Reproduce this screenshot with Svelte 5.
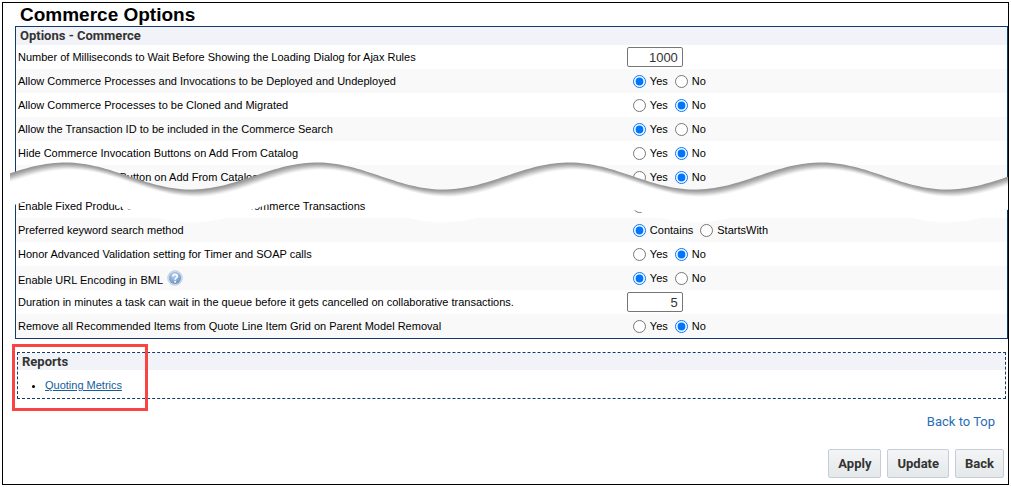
<script lang="ts">
  type Option = {
    id: string;
    label: string;
    choices?: string[];
    value: string;
    help?: boolean;
  };

  const yesNo = ['Yes', 'No'];

  let options: Option[] = $state([
    { id: 'ajaxWait', label: 'Number of Milliseconds to Wait Before Showing the Loading Dialog for Ajax Rules', value: '1000' },
    { id: 'deploy', label: 'Allow Commerce Processes and Invocations to be Deployed and Undeployed', choices: yesNo, value: 'Yes' },
    { id: 'clone', label: 'Allow Commerce Processes to be Cloned and Migrated', choices: yesNo, value: 'No' },
    { id: 'transactionId', label: 'Allow the Transaction ID to be included in the Commerce Search', choices: yesNo, value: 'Yes' },
    { id: 'hideInvocation', label: 'Hide Commerce Invocation Buttons on Add From Catalog', choices: yesNo, value: 'No' },
    { id: 'hideSave', label: 'Hide Save as Quote Button on Add From Catalog', choices: yesNo, value: 'No' },
  ]);

  let moreOptions: Option[] = $state([
    { id: 'fixedProduct', label: 'Enable Fixed Product Column Headers for the Commerce Transactions', choices: yesNo, value: 'No' },
    { id: 'keyword', label: 'Preferred keyword search method', choices: ['Contains', 'StartsWith'], value: 'Contains' },
    { id: 'validation', label: 'Honor Advanced Validation setting for Timer and SOAP calls', choices: yesNo, value: 'No' },
    { id: 'urlEncoding', label: 'Enable URL Encoding in BML', choices: yesNo, value: 'Yes', help: true },
    { id: 'queueWait', label: 'Duration in minutes a task can wait in the queue before it gets cancelled on collaborative transactions.', value: '5' },
    { id: 'removeItems', label: 'Remove all Recommended Items from Quote Line Item Grid on Parent Model Removal', choices: yesNo, value: 'No' },
  ]);

  // the tear between the two halves of the list
  const waveWidth = 998;

  function waveY(x: number) {
    return 14 - 13.5 * Math.cos(((x - 55) / 252) * 2 * Math.PI);
  }

  function tear(dx: number, dy: number, depth: number) {
    const top: string[] = [];
    const bottom: string[] = [];
    for (let x = 0; x <= waveWidth + 2; x += 4) {
      top.push(`${x} ${(waveY(x - dx) + dy).toFixed(1)}`);
      bottom.unshift(`${x} ${(waveY(x) + depth).toFixed(1)}`);
    }
    return 'M' + top.concat(bottom).join('L') + 'Z';
  }

  // shadow under the torn edge, dark to light
  const shades = [150, 158, 168, 180, 193, 207, 221, 235, 246];
</script>

{#snippet row(option: Option)}
  <div class="row">
    <div class="label">
      {#if option.choices}
        <span id="{option.id}-label">{option.label}</span>
      {:else}
        <label for={option.id}>{option.label}</label>
      {/if}
      {#if option.help}
        <svg class="help" viewBox="0 0 16 16" role="img" aria-label="Help">
          <defs>
            <radialGradient id="ball" cx="45%" cy="30%" r="75%">
              <stop offset="0" stop-color="#b4d0ee" />
              <stop offset="0.6" stop-color="#86aad6" />
              <stop offset="1" stop-color="#6289be" />
            </radialGradient>
          </defs>
          <circle cx="8" cy="8" r="7.3" fill="#d3dfee" stroke="#b9c8dc" stroke-width="0.8" />
          <circle cx="8" cy="8" r="6" fill="url(#ball)" />
          <path d="M5.8 6.4C5.8 3.6 10.3 3.6 10.3 6.3C10.3 8 8.1 7.9 8.1 9.7" fill="none" stroke="#fff" stroke-width="1.7" />
          <circle cx="8.1" cy="11.7" r="1" fill="#fff" />
        </svg>
      {/if}
    </div>
    {#if option.choices}
      <div class="choices" role="radiogroup" aria-labelledby="{option.id}-label">
        {#each option.choices as choice}
          <label>
            <input
              type="radio"
              name={option.id}
              value={choice}
              checked={option.value === choice}
              onchange={() => (option.value = choice)}
            />{choice}
          </label>
        {/each}
      </div>
    {:else}
      <div class="entry">
        <input
          type="text"
          id={option.id}
          value={option.value}
          oninput={(e) => (option.value = e.currentTarget.value)}
        />
      </div>
    {/if}
  </div>
{/snippet}

<main>
  <h1>Commerce Options</h1>

  <section class="options">
    <h2>Options - Commerce</h2>
    <div class="rows">
      {#each options as option (option.id)}
        {@render row(option)}
      {/each}
    </div>
    <div class="tear">
      <svg viewBox="0 0 {waveWidth} 62" preserveAspectRatio="none" aria-hidden="true">
        {#each shades as shade, i}
          <path d={tear(i * 0.5, i * 0.8, 24)} fill="rgb({shade},{shade},{shade})" />
        {/each}
        <path d={tear(4.5, 7.2, 33)} fill="#fff" />
      </svg>
    </div>
    <div class="rows">
      {#each moreOptions as option (option.id)}
        {@render row(option)}
      {/each}
    </div>
  </section>

  <section class="reports">
    <h2>Reports</h2>
    <ul>
      <li><a href="#metrics">Quoting Metrics</a></li>
    </ul>
    <div class="highlight"></div>
  </section>

  <a class="top" href="#top">Back to Top</a>

  <div class="buttons">
    <button type="button">Apply</button>
    <button type="button">Update</button>
    <button type="button">Back</button>
  </div>
</main>

<style>
  :global(body) {
    background: #fff;
  }

  main {
    display: flex;
    flex-direction: column;
    margin: 2px;
    padding-bottom: 6px;
    border: 1px solid #000;
    font-family: "Liberation Sans", Arial, sans-serif;
    font-size: 11px;
    color: #000;
  }

  h1 {
    margin: 0;
    padding-left: 17px;
    font-size: 19px;
    line-height: 23px;
  }

  h2 {
    margin: 0;
    padding: 0 4px;
    background: #f2f3f8;
    color: #333;
    font-family: Roboto, "Liberation Sans", sans-serif;
    font-size: 13px;
    font-weight: 700;
    line-height: 18px;
  }

  .options {
    margin-left: 12px;
    border: 1px solid #123a6b;
  }

  .row {
    display: grid;
    grid-template-columns: 8fr 5fr;
    align-items: center;
    height: 24px;
  }

  .row:nth-child(even) {
    background: #f9f9f9;
  }

  .label {
    display: flex;
    align-items: flex-end;
    gap: 4px;
    padding-left: 2px;
    white-space: nowrap;
  }

  .help {
    width: 16px;
    height: 16px;
  }

  .choices {
    display: flex;
    gap: 7px;
    padding-left: 7px;
  }

  .choices label {
    display: flex;
    align-items: center;
    gap: 4px;
  }

  .choices input {
    width: 13px;
    height: 13px;
    margin: 0;
  }

  .entry {
    padding-left: 1px;
  }

  .entry input {
    display: block;
    box-sizing: border-box;
    width: 56px;
    height: 20px;
    padding: 0 4px;
    border: 1px solid #767676;
    border-radius: 2px;
    font-family: inherit;
    font-size: 13px;
    color: #333;
    text-align: right;
  }

  .tear {
    position: relative;
    height: 5px;
  }

  .tear svg {
    position: absolute;
    top: -27px;
    left: -6px;
    width: calc(100% + 7px);
    height: 62px;
  }

  .reports {
    position: relative;
    margin: 13px 2px 0 14px;
    border: 1px dashed #123a6b;
  }

  .reports h2 {
    line-height: 17px;
  }

  ul {
    margin: 0;
    padding: 8px 0 6px 27px;
  }

  li {
    line-height: 14px;
  }

  .reports a {
    color: #145c9e;
  }

  .highlight {
    position: absolute;
    top: -9px;
    left: -6px;
    box-sizing: border-box;
    width: 136px;
    height: 67px;
    border: 3px solid #f94444;
    pointer-events: none;
  }

  .top {
    align-self: flex-end;
    margin: 14px 13px 0 0;
    color: #2a6db5;
    font-family: Roboto, "Liberation Sans", sans-serif;
    font-size: 13px;
    line-height: 18px;
    text-decoration: none;
  }

  .buttons {
    display: flex;
    justify-content: flex-end;
    gap: 6px;
    margin: 18px 4px 0 0;
  }

  button {
    height: 29px;
    padding: 0 9px;
    border: 1px solid #c4ced7;
    border-radius: 2px;
    background: linear-gradient(#f3f5f6, #e4e8ea);
    color: #333;
    font-family: Roboto, "Liberation Sans", sans-serif;
    font-size: 13px;
    font-weight: 700;
  }
</style>
